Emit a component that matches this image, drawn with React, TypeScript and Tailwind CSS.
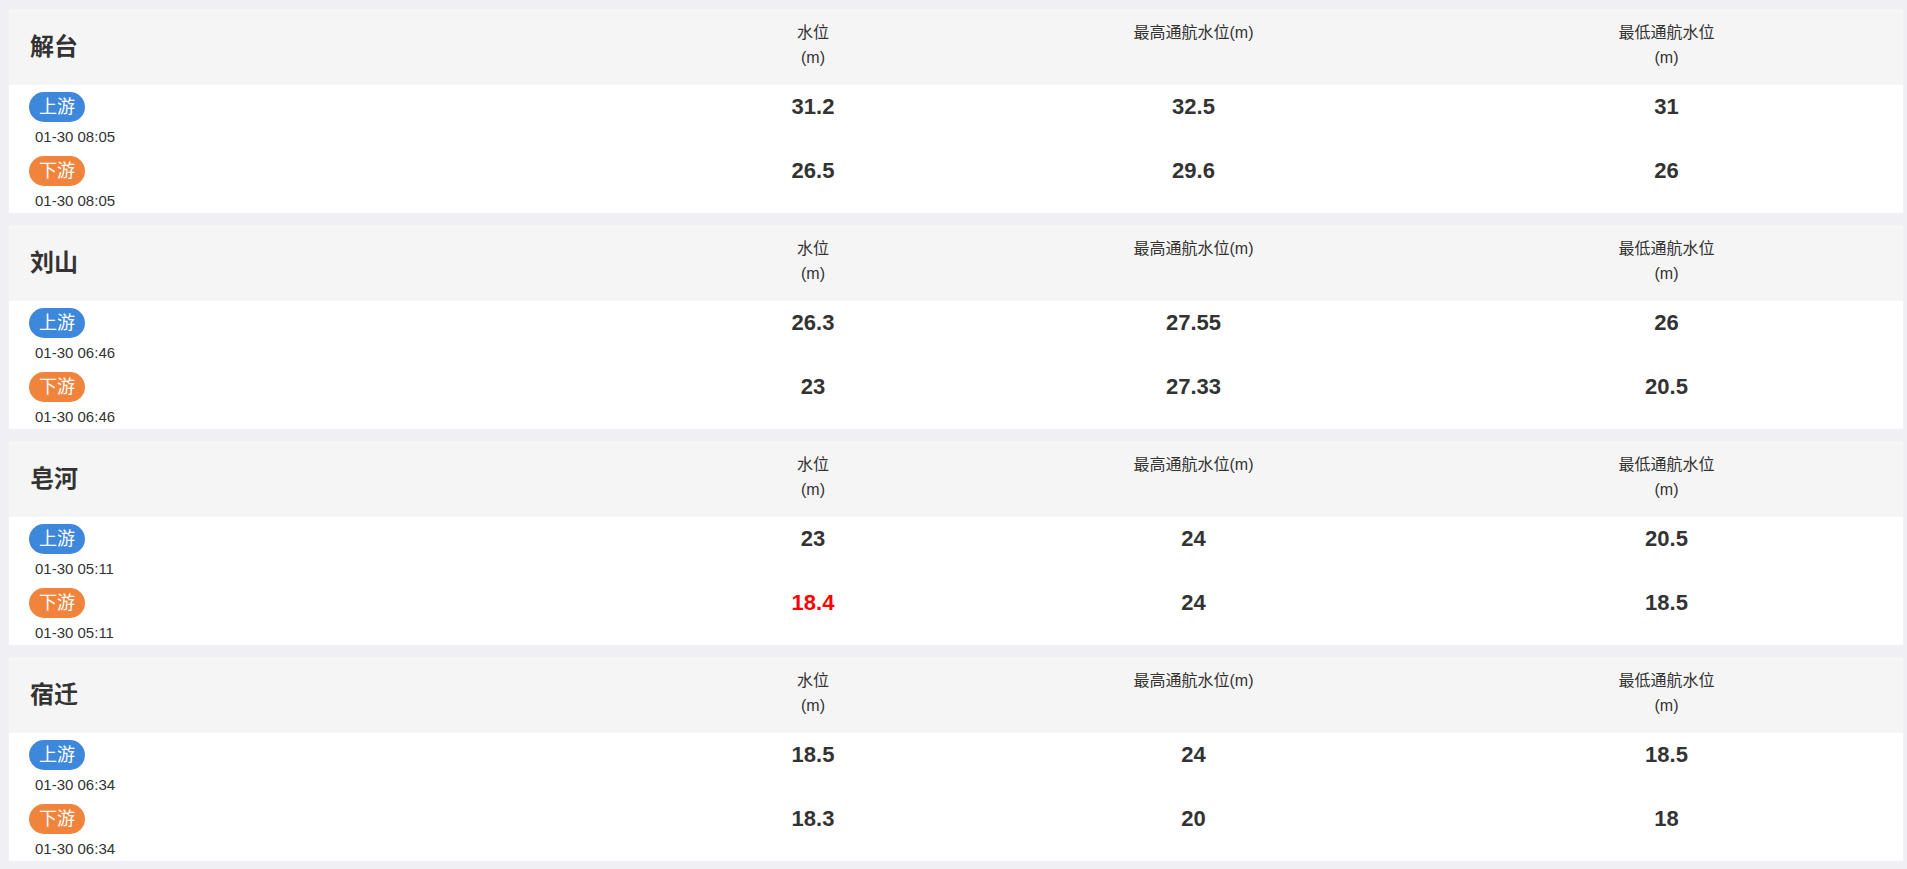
import React from "react";

interface Row {
  time: string;
  level: string;
  high: string;
  low: string;
  alert?: boolean;
}

interface Station {
  name: string;
  up: Row;
  down: Row;
}

const stations: Station[] = [
  {
    name: "解台",
    up: { time: "01-30 08:05", level: "31.2", high: "32.5", low: "31" },
    down: { time: "01-30 08:05", level: "26.5", high: "29.6", low: "26" },
  },
  {
    name: "刘山",
    up: { time: "01-30 06:46", level: "26.3", high: "27.55", low: "26" },
    down: { time: "01-30 06:46", level: "23", high: "27.33", low: "20.5" },
  },
  {
    name: "皂河",
    up: { time: "01-30 05:11", level: "23", high: "24", low: "20.5" },
    down: { time: "01-30 05:11", level: "18.4", high: "24", low: "18.5", alert: true },
  },
  {
    name: "宿迁",
    up: { time: "01-30 06:34", level: "18.5", high: "24", low: "18.5" },
    down: { time: "01-30 06:34", level: "18.3", high: "20", low: "18" },
  },
];

const cols = "grid grid-cols-[660px_288px_1fr_1fr]";

function DataRow({ row, kind }: { row: Row; kind: "up" | "down" }) {
  return (
    <div className={`${cols} h-[64px]`}>
      <div className="pl-[20px] pt-[7px]">
        <span
          className={`inline-flex h-[30px] items-center rounded-full px-[10px] text-[18px] text-white ${
            kind === "up" ? "bg-[#3e88dc]" : "bg-[#f0843c]"
          }`}
        >
          {kind === "up" ? "上游" : "下游"}
        </span>
        <div className="mt-[5px] pl-[6px] text-[15px] leading-[20px] text-[#333]">{row.time}</div>
      </div>
      <div
        className={`pt-[7px] text-center text-[22px] font-bold leading-[30px] ${
          row.alert ? "text-[#ff0000]" : "text-[#333]"
        }`}
      >
        {row.level}
      </div>
      <div className="pt-[7px] text-center text-[22px] font-bold leading-[30px] text-[#333]">{row.high}</div>
      <div className="pt-[7px] text-center text-[22px] font-bold leading-[30px] text-[#333]">{row.low}</div>
    </div>
  );
}

export default function App() {
  return (
    <div
      className="min-h-screen bg-[#efeff4] pl-[9px] pr-[4px] pt-[9px] pb-[8px]"
      style={{ fontFamily: '"Liberation Sans", Arial, "Noto Sans CJK SC", sans-serif' }}
    >
      <div className="flex flex-col gap-[12px]">
        {stations.map((s) => (
          <div key={s.name} className="bg-white">
            <div className={`${cols} h-[76px] bg-[#f5f5f5] text-[#333]`}>
              <div className="flex items-center pl-[21px] text-[24px] font-bold">{s.name}</div>
              <div className="pt-[11px] text-center text-[16px] leading-[25px]">
                水位
                <br />
                (m)
              </div>
              <div className="pt-[11px] text-center text-[16px] leading-[25px]">最高通航水位(m)</div>
              <div className="pt-[11px] text-center text-[16px] leading-[25px]">
                最低通航水位
                <br />
                (m)
              </div>
            </div>
            <DataRow row={s.up} kind="up" />
            <DataRow row={s.down} kind="down" />
          </div>
        ))}
      </div>
    </div>
  );
}
